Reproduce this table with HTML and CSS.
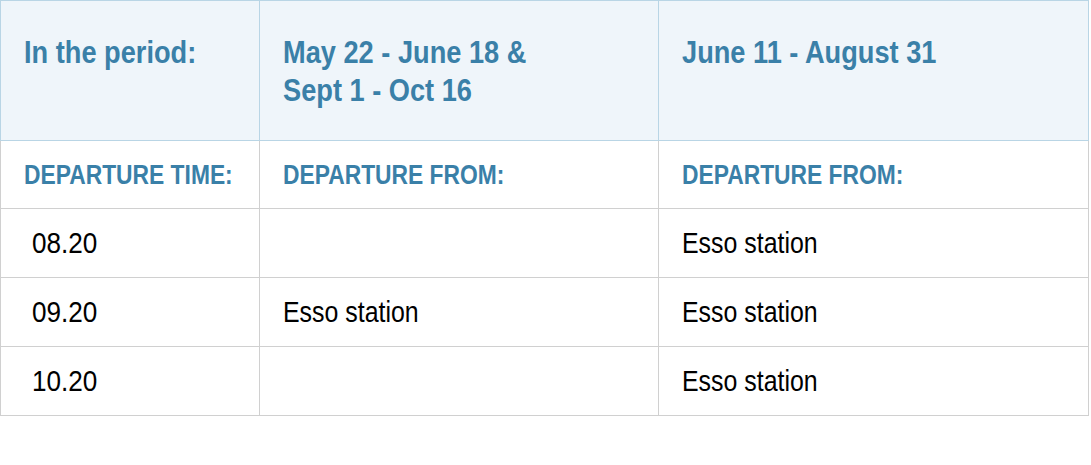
FILE: index.html
```html
<!DOCTYPE html>
<html lang="en">
<head>
<meta charset="utf-8">
<title>Departure times</title>
<link rel="stylesheet" href="styles.css">
</head>
<body>
<div class="schedule">
  <div class="cell head first"><span class="t">In the period:</span></div>
  <div class="cell head"><span class="t">May 22 - June 18 &amp;<br>Sept 1 - Oct 16</span></div>
  <div class="cell head"><span class="t">June 11 - August 31</span></div>

  <div class="cell label first"><span class="t">DEPARTURE TIME:</span></div>
  <div class="cell label"><span class="t">DEPARTURE FROM:</span></div>
  <div class="cell label"><span class="t">DEPARTURE FROM:</span></div>

  <div class="cell body first time"><span class="t">08.20</span></div>
  <div class="cell body"></div>
  <div class="cell body"><span class="t">Esso station</span></div>

  <div class="cell body first time"><span class="t">09.20</span></div>
  <div class="cell body"><span class="t">Esso station</span></div>
  <div class="cell body"><span class="t">Esso station</span></div>

  <div class="cell body first time"><span class="t">10.20</span></div>
  <div class="cell body"></div>
  <div class="cell body"><span class="t">Esso station</span></div>
</div>
</body>
</html>
```

FILE: styles.css
```css
html, body {
  margin: 0;
  padding: 0;
  background: #ffffff;
}

body {
  font-family: "Liberation Sans", Arial, sans-serif;
}

.schedule {
  display: grid;
  grid-template-columns: 260px 399px 430px;
  grid-template-rows: 141px 68px 69px 69px 69px;
  width: 1089px;
}

.cell {
  box-sizing: border-box;
  border-right: 1px solid #d0d0d0;
  border-bottom: 1px solid #d0d0d0;
  padding-left: 23px;
  overflow: visible;
}

/* condensed rendering of a regular sans face */
.t {
  display: inline-block;
  white-space: nowrap;
  transform: scaleX(0.83);
  transform-origin: 0 50%;
}

.cell.first {
  border-left: 1px solid #d0d0d0;
}

.head {
  background: #eff5fa;
  border-top: 1px solid #b9d5e5;
  border-right-color: #b9d5e5;
  border-bottom-color: #b9d5e5;
  color: #3a80a8;
  font-weight: bold;
  font-size: 32px;
  line-height: 38px;
  padding-top: 32px;
}

.head .t {
  transform: scaleX(0.85);
}

.head.first {
  border-left-color: #b9d5e5;
}

.label {
  display: flex;
  align-items: center;
  color: #3a80a8;
  font-weight: bold;
  font-size: 27px;
  padding-top: 2px;
}

.label .t {
  transform: scaleX(0.845);
}

.body {
  display: flex;
  align-items: center;
  color: #000000;
  font-size: 30px;
}

.body.time {
  padding-left: 31px;
}

.body.time .t {
  transform: scaleX(0.87);
}
```
